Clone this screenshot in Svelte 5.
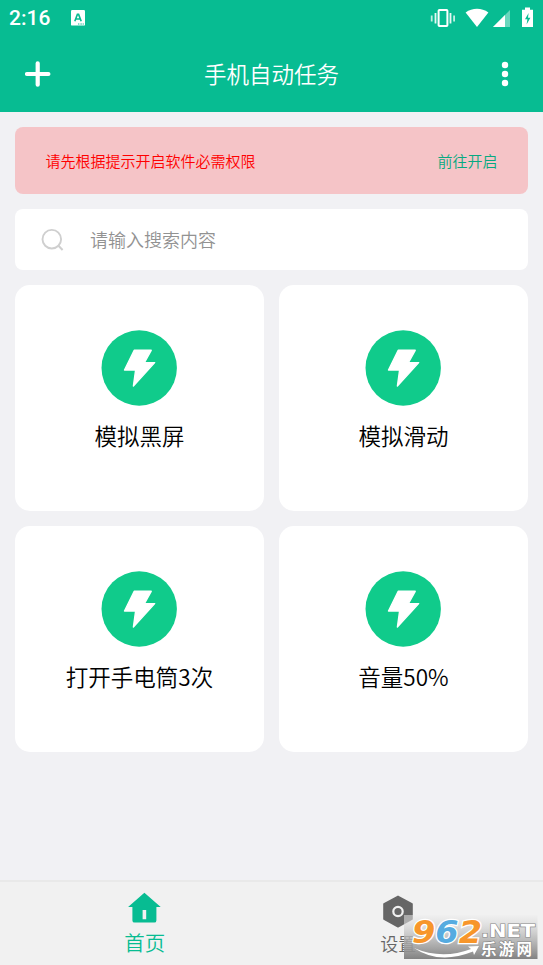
<script lang="ts">
	interface Task {
		id: number;
		name: string;
	}

	const tasks: Task[] = [
		{ id: 1, name: '模拟黑屏' },
		{ id: 2, name: '模拟滑动' },
		{ id: 3, name: '打开手电筒3次' },
		{ id: 4, name: '音量50%' }
	];

	let activeTab = $state('home');
	let keyword = $state('');
</script>

<div class="screen">
	<div class="status-bar">
		<span class="time">2:16</span>
		<svg class="app-badge" width="14" height="16" viewBox="0 0 14 16">
			<rect width="14" height="15.6" rx="1.2" fill="#fff" />
			<path d="M3.8 11.2 L6.4 4.4 H7.6 L10.2 11.2 M4.8 9 H9.2" fill="none" stroke="#07bc92" stroke-width="1.6" />
			<path d="M7 14 H13" stroke="#07bc92" stroke-width="1" stroke-dasharray="1 0.6" />
		</svg>
		<svg class="status-icons" width="104" height="22" viewBox="0 0 104 22">
			<!-- Vibrate -->
			<rect x="8.6" y="3" width="8.8" height="16" rx="0.8" fill="none" stroke="#fff" stroke-width="2" />
			<path d="M5.5 6 V16.6 M20.5 6 V16.6" stroke="#fff" stroke-width="1.8" opacity="0.9" />
			<path d="M1.7 8.5 V14.4 M24.1 8.5 V14.4" stroke="#fff" stroke-width="1.8" opacity="0.75" />
			<!-- Wifi -->
			<path d="M35.6 5.4 C42.5 0.4 51.5 0.4 58.4 5.4 L47 20 Z" fill="#fff" />
			<!-- Signal -->
			<path d="M63 20 L80 3 V20 Z" fill="#fff" opacity="0.4" />
			<path d="M63 20 L75 8 V20 Z" fill="#fff" />
			<!-- Battery -->
			<path d="M92 2.8 H95 V0.6 H100 V2.8 H103 V20 H92 Z" fill="#fff" />
			<path d="M98.6 6 L95 12.2 H97.4 L96.6 17.4 L100.4 10.8 H98 Z" fill="#07bc92" />
		</svg>
	</div>

	<header class="app-bar">
		<button class="icon-btn" aria-label="添加">
			<svg width="26" height="26" viewBox="0 0 26 26">
				<path d="M12.7 2.3 V23.7 M2 13 H23.4" stroke="#fff" stroke-width="4.2" stroke-linecap="round" />
			</svg>
		</button>
		<h1>手机自动任务</h1>
		<button class="icon-btn" aria-label="更多">
			<svg width="26" height="26" viewBox="0 0 26 26" fill="#fff">
				<circle cx="13" cy="4" r="3.2" />
				<circle cx="13" cy="13" r="3.2" />
				<circle cx="13" cy="22" r="3.2" />
			</svg>
		</button>
	</header>

	<main>
		<div class="notice">
			<span>请先根据提示开启软件必需权限</span>
			<button class="open-btn">前往开启</button>
		</div>

		<label class="search">
			<svg width="24" height="24" viewBox="0 0 24 24" fill="none" stroke="#cfcfcf" stroke-width="1.9">
				<circle cx="10.8" cy="11.2" r="9.3" />
				<path d="M17 17.2 L21.6 22" stroke-width="2" />
			</svg>
			<input bind:value={keyword} placeholder="请输入搜索内容" />
		</label>

		<div class="grid">
			{#each tasks as task (task.id)}
				<div class="card">
					<svg width="77" height="76" viewBox="0 0 77 76">
						<circle cx="38.2" cy="38" r="37.7" fill="#10cb8b" />
						<path
							d="M33.2 20.3 H50.2 L43.4 32.6 H53.7 L32.4 56 L34.6 40 H23.5 Z"
							fill="#fff"
							stroke="#fff"
							stroke-width="1.4"
							stroke-linejoin="round"
						/>
					</svg>
					<span>{task.name}</span>
				</div>
			{/each}
		</div>
	</main>

	<nav>
		<button class="tab" class:active={activeTab === 'home'} onclick={() => (activeTab = 'home')}>
			<svg width="34" height="32" viewBox="0 0 34 32">
				<path
					fill="currentColor"
					fill-rule="evenodd"
					d="M16.4 0.8 L32.7 15 H28.4 V28.4 Q28.4 30.6 26.2 30.6 H6.6 Q4.4 30.6 4.4 28.4 V15 H0.1 Z M14.6 18 V27.2 H18.2 V18 Z"
				/>
			</svg>
			<span>首页</span>
		</button>
		<button class="tab settings" class:active={activeTab === 'settings'} onclick={() => (activeTab = 'settings')}>
			<svg width="32" height="34" viewBox="0 0 32 34">
				<path
					d="M16 2.4 L30 10 V25 L16 32.8 L2 25 V10 Z"
					fill="currentColor"
					stroke="currentColor"
					stroke-width="1.6"
					stroke-linejoin="round"
				/>
				<circle cx="16" cy="17.5" r="4.7" fill="none" stroke="#f1f1f1" stroke-width="2.2" />
			</svg>
			<span>设置</span>
		</button>
	</nav>

	<svg class="watermark" width="134" height="45" viewBox="0 0 134 45">
		<defs>
			<linearGradient id="plate" x1="0" y1="0" x2="0" y2="1">
				<stop offset="0" stop-color="#eeeeee" stop-opacity="0.5" />
				<stop offset="0.5" stop-color="#b8b8b8" stop-opacity="0.8" />
				<stop offset="1" stop-color="#7c7c7c" stop-opacity="0.95" />
			</linearGradient>
		</defs>
		<rect width="133.5" height="44" fill="url(#plate)" />
		<path d="M10 33 Q38 45 67 34 L64 31.5 L75 31 L70 40 L69 36.5 Q35 50 10 33 Z" fill="#fff" />
		<text class="digits" x="8" y="27.5" textLength="70" lengthAdjust="spacingAndGlyphs"><tspan fill="#f7962b">9</tspan><tspan fill="#55abe0">6</tspan><tspan fill="#f7962b">2</tspan></text>
		<text class="net" x="77" y="21.5" textLength="54" lengthAdjust="spacingAndGlyphs">.NET</text>
		<text class="site" x="77" y="39.5" textLength="51">乐游网</text>
	</svg>
</div>

<style>
	:global(body) {
		margin: 0;
		background: #f1f1f4;
	}

	.screen {
		position: relative;
		display: flex;
		flex-direction: column;
		height: 965px;
		overflow: hidden;
		background: #f1f1f4;
		font-family: 'Noto Sans CJK SC', sans-serif;
		font-weight: 350;
	}

	button {
		padding: 0;
		border: 0;
		background: none;
		font: inherit;
	}

	svg {
		display: block;
	}

	.status-bar {
		display: flex;
		align-items: center;
		box-sizing: border-box;
		height: 36px;
		padding: 0 9px;
		background: #07bc92;
		color: #fff;
	}

	.time {
		width: 62px;
		font-family: Roboto, sans-serif;
		font-size: 21px;
		font-weight: 500;
		line-height: 37px;
	}

	.status-icons {
		margin-left: auto;
	}

	.app-bar {
		display: flex;
		align-items: center;
		justify-content: space-between;
		box-sizing: border-box;
		height: 75.5px;
		padding: 0 25px;
		background: #07bc92;
	}

	h1 {
		margin: 0 0 2px;
		color: #fff;
		font-size: 22.5px;
		font-weight: 350;
		line-height: 30px;
	}

	main {
		flex: 1;
		padding: 15px 15px 0;
	}

	.notice {
		display: flex;
		align-items: center;
		justify-content: space-between;
		box-sizing: border-box;
		height: 67.5px;
		padding: 0 30.5px;
		border-radius: 8px;
		background: #f5c4c7;
		color: #f00;
		font-size: 15px;
	}

	.open-btn {
		color: #07a981;
	}

	.search {
		display: flex;
		align-items: center;
		gap: 25px;
		box-sizing: border-box;
		height: 61px;
		margin: 15px 0;
		padding: 0 26px;
		border-radius: 8px;
		background: #fff;
	}

	input {
		flex: 1;
		padding: 0 0 2px;
		border: 0;
		outline: 0;
		font: inherit;
		font-size: 18px;
	}

	input::placeholder {
		color: #929292;
	}

	.grid {
		display: grid;
		grid-template-columns: 1fr 1fr;
		gap: 15px;
	}

	.card {
		display: flex;
		flex-direction: column;
		align-items: center;
		box-sizing: border-box;
		height: 226px;
		padding-top: 45px;
		border-radius: 15px;
		background: #fff;
	}

	.card span {
		margin-top: 12px;
		color: #000;
		font-size: 22.5px;
		line-height: 34px;
	}

	nav {
		display: flex;
		box-sizing: border-box;
		height: 85px;
		padding: 0 18px;
		border-top: 2px solid #e9e9e9;
		background: #f1f1f1;
	}

	.tab {
		display: flex;
		flex: 1;
		flex-direction: column;
		align-items: center;
		padding-top: 10px;
		color: #666;
		font-size: 18px;
		line-height: 31px;
	}

	.tab.active {
		color: #07bc92;
		font-size: 20.5px;
		line-height: 37px;
	}

	.tab.settings {
		padding-top: 12px;
	}

	.watermark {
		position: absolute;
		right: 5px;
		bottom: 5px;
	}

	.digits {
		font-family: 'DejaVu Sans', sans-serif;
		font-size: 32px;
		font-weight: 700;
		font-style: italic;
		stroke: #fff;
		stroke-width: 2.5px;
		paint-order: stroke;
	}

	.net,
	.site {
		fill: #fff;
		stroke: #888;
		stroke-width: 1.2px;
		paint-order: stroke;
		font-weight: 700;
	}

	.net {
		font-family: 'DejaVu Sans', sans-serif;
		font-size: 18px;
	}

	.site {
		font-family: 'Noto Sans CJK SC', sans-serif;
		font-size: 15.5px;
	}
</style>
